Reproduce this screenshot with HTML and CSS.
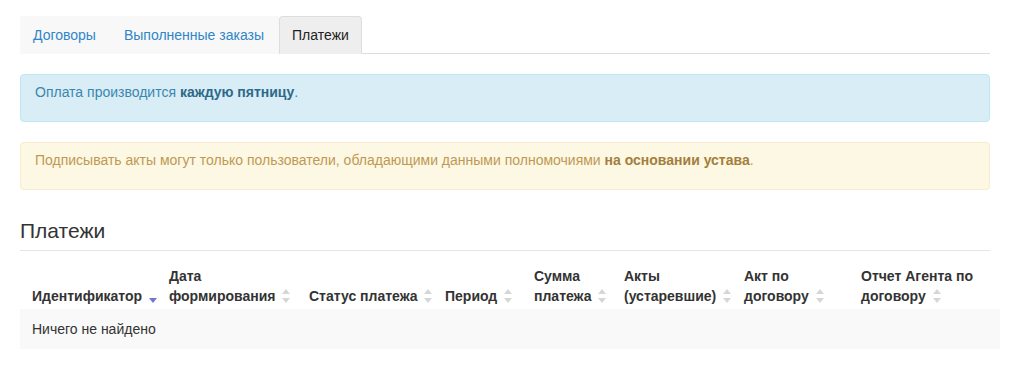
FILE: index.html
```html
<!DOCTYPE html>
<html lang="ru">
<head>
<meta charset="UTF-8">
<title>Платежи</title>
<link rel="stylesheet" href="styles.css">
</head>
<body>

<div class="page">
<ul class="tabs">
<li class="tab"><a href="#">Договоры</a></li>
<li class="tab"><a href="#">Выполненные заказы</a></li>
<li class="tab active"><a href="#">Платежи</a></li>
</ul>

<div class="alert alert-info">Оплата производится <b>каждую пятницу</b>.</div>
<div class="alert alert-warning">Подписывать акты могут только пользователи, обладающими данными полномочиями <b>на основании устава</b>.</div>

<h3 class="page-header">Платежи</h3>

<table class="grid">
<colgroup>
<col style="width:137px"><col style="width:140px"><col style="width:136px"><col style="width:89px">
<col style="width:90px"><col style="width:120px"><col style="width:117px"><col>
</colgroup>
<thead>
<tr>
<th><span class="nw">Идентификатор <span class="sort desc"><svg width="8" height="14" viewBox="0 0 8 14"><path d="M0 9h8l-4 5z"/></svg></span></span></th>
<th>Дата <span class="nw">формирования <span class="sort"><svg width="8" height="14" viewBox="0 0 8 14"><path d="M0 5l4-5 4 5zM0 9h8l-4 5z"/></svg></span></span></th>
<th>Статус <span class="nw">платежа <span class="sort"><svg width="8" height="14" viewBox="0 0 8 14"><path d="M0 5l4-5 4 5zM0 9h8l-4 5z"/></svg></span></span></th>
<th><span class="nw">Период <span class="sort"><svg width="8" height="14" viewBox="0 0 8 14"><path d="M0 5l4-5 4 5zM0 9h8l-4 5z"/></svg></span></span></th>
<th>Сумма <span class="nw">платежа <span class="sort"><svg width="8" height="14" viewBox="0 0 8 14"><path d="M0 5l4-5 4 5zM0 9h8l-4 5z"/></svg></span></span></th>
<th>Акты <span class="nw">(устаревшие) <span class="sort"><svg width="8" height="14" viewBox="0 0 8 14"><path d="M0 5l4-5 4 5zM0 9h8l-4 5z"/></svg></span></span></th>
<th>Акт по <span class="nw">договору <span class="sort"><svg width="8" height="14" viewBox="0 0 8 14"><path d="M0 5l4-5 4 5zM0 9h8l-4 5z"/></svg></span></span></th>
<th>Отчет Агента по <span class="nw">договору <span class="sort"><svg width="8" height="14" viewBox="0 0 8 14"><path d="M0 5l4-5 4 5zM0 9h8l-4 5z"/></svg></span></span></th>
</tr>
</thead>
<tbody>
<tr class="empty"><td colspan="8">Ничего не найдено</td></tr>
</tbody>
</table>
</div>

</body>
</html>
```

FILE: styles.css
```css
body {
margin: 0;
font-family: "Liberation Sans", Arial, sans-serif;
font-size: 14px;
line-height: 20px;
color: #333;
background: #fff;
}
.page {
width: 970px;
padding: 16px 0 0 20px;
}
.tabs {
display: flex;
margin: 0 0 20px;
padding: 0;
list-style: none;
border-bottom: 1px solid #ddd;
}
.tab {
margin-bottom: -1px;
}
.tab a {
display: block;
padding: 8px 14px 8px 12px;
color: #2f86c9;
text-decoration: none;
background: #f8f8f8;
border: 1px solid #f8f8f8;
}
.tab.active a {
padding: 8px 12px;
color: #222;
background: #eee;
border-color: #ddd #ddd #eee;
border-radius: 4px 4px 0 0;
}
.alert {
padding: 7px 14px 19px;
margin-bottom: 20px;
border: 1px solid transparent;
border-radius: 4px;
}
.alert-info {
color: #3a87ad;
background: #d9edf7;
border-color: #bce8f1;
}
.alert-info b {
color: #2d6987;
}
.alert-warning {
color: #c09853;
background: #fcf8e3;
border-color: #faebcc;
}
.alert-warning b {
color: #a47e3c;
}
.page-header {
margin: 29px 0 7px;
padding-bottom: 7px;
font-size: 21px;
font-weight: normal;
line-height: 24px;
border-bottom: 1px solid #e5e5e5;
}
.grid {
width: 980px;
border-collapse: collapse;
table-layout: fixed;
}
.grid th {
padding: 8px 0 3px 12px;
text-align: left;
vertical-align: bottom;
font-weight: bold;
}
.grid td {
padding: 10px 12px;
}
.empty td {
background: #f9f9f9;
}
.nw {
white-space: nowrap;
}
.sort {
display: inline-block;
vertical-align: -2px;
margin-left: 3px;
}
.sort svg {
display: block;
fill: #d6d6d6;
}
.sort.desc svg {
fill: #7474d6;
}
```
